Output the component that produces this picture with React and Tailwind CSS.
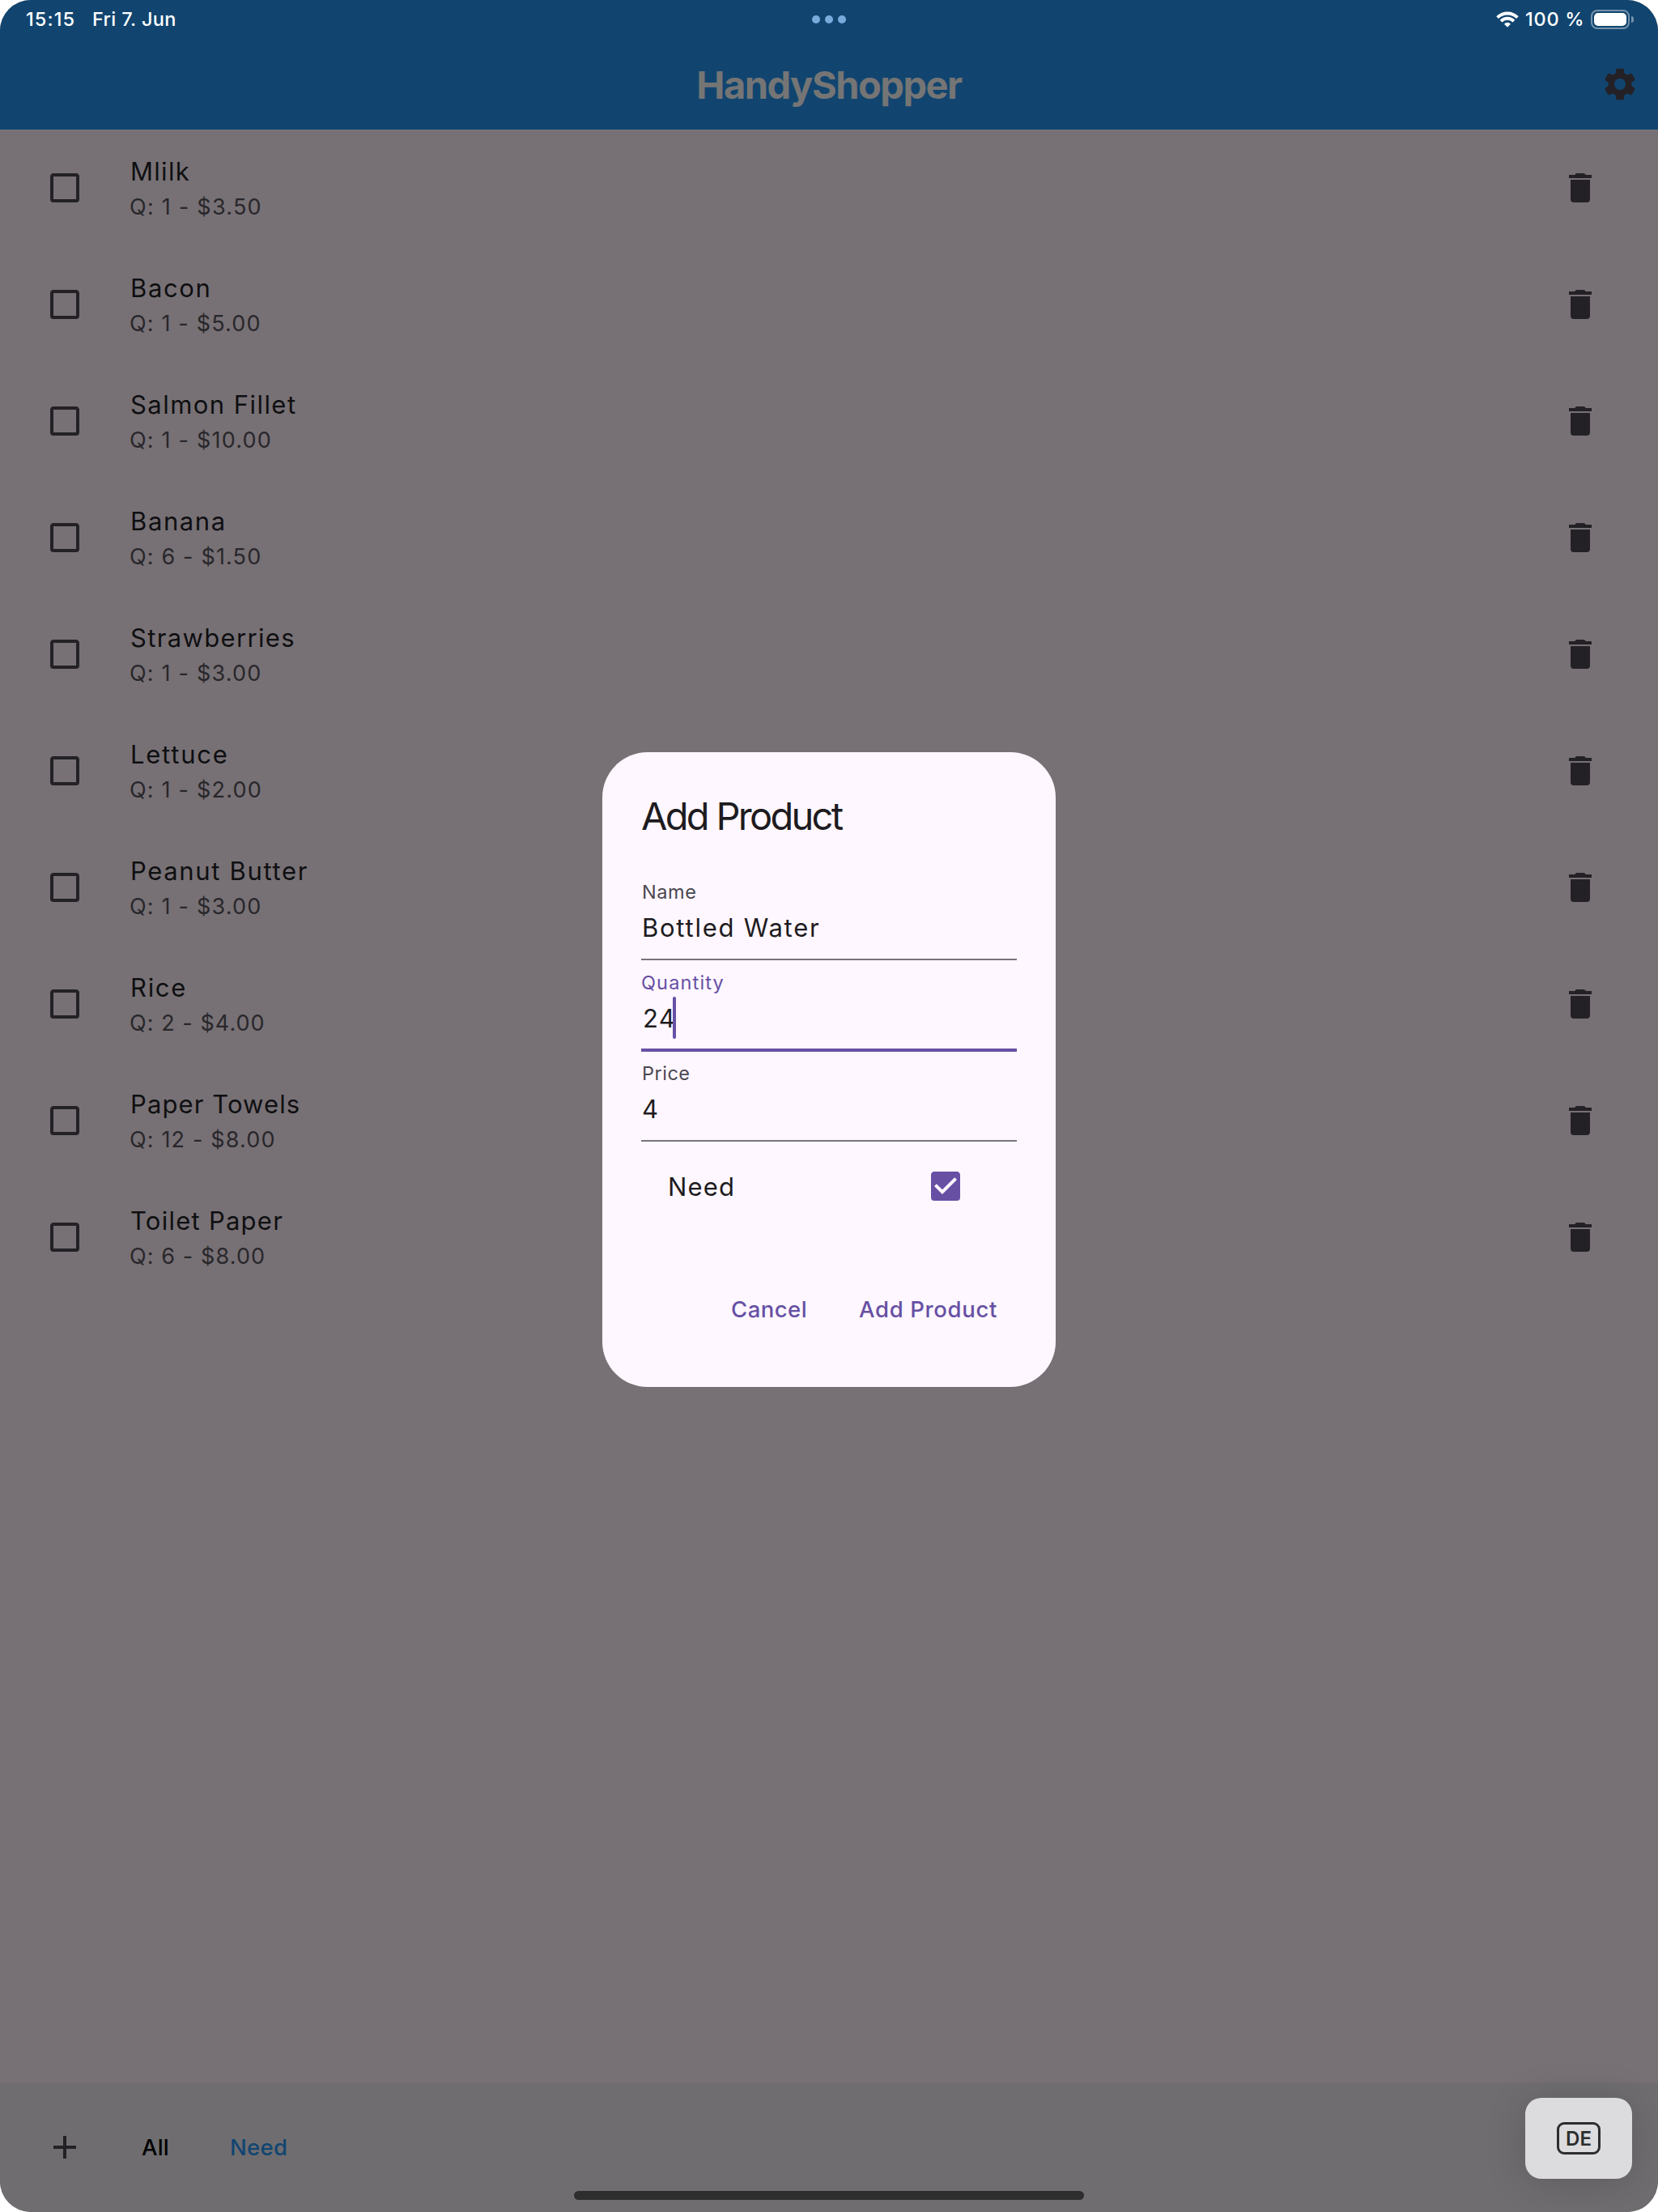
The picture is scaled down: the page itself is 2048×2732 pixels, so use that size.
const PRODUCTS = [
  { name: "Mlilk", track: "tracking-[1.3px]", detail: "Q: 1 - $3.50", detailTrack: "tracking-[1.25px]" },
  { name: "Bacon", track: "tracking-[1.6px]", detail: "Q: 1 - $5.00", detailTrack: "tracking-[1.15px]" },
  { name: "Salmon Fillet", track: "tracking-[1.45px]", detail: "Q: 1 - $10.00", detailTrack: "tracking-[1.2px]" },
  { name: "Banana", track: "tracking-[1.6px]", detail: "Q: 6 - $1.50", detailTrack: "tracking-[1.15px]" },
  { name: "Strawberries", track: "tracking-[1.35px]", detail: "Q: 1 - $3.00", detailTrack: "tracking-[1.2px]" },
  { name: "Lettuce", track: "tracking-[1.75px]", detail: "Q: 1 - $2.00", detailTrack: "tracking-[1.2px]" },
  { name: "Peanut Butter", track: "tracking-[1.65px]", detail: "Q: 1 - $3.00", detailTrack: "tracking-[1.2px]" },
  { name: "Rice", track: "tracking-[1.7px]", detail: "Q: 2 - $4.00", detailTrack: "tracking-[1.05px]" },
  { name: "Paper Towels", track: "tracking-[1.1px]", detail: "Q: 12 - $8.00", detailTrack: "tracking-[1.15px]" },
  { name: "Toilet Paper", track: "tracking-[1.25px]", detail: "Q: 6 - $8.00", detailTrack: "tracking-[1.1px]" },
];

const ICONS = {
  blank:
    "M19,3H5C3.89,3 3,3.89 3,5V19A2,2 0 0,0 5,21H19A2,2 0 0,0 21,19V5C21,3.89 20.1,3 19,3M19,5V19H5V5H19Z",
  marked:
    "M10,17L5,12L6.41,10.58L10,14.17L17.59,6.58L19,8M19,3H5C3.89,3 3,3.89 3,5V19A2,2 0 0,0 5,21H19A2,2 0 0,0 21,19V5C21,3.89 20.1,3 19,3Z",
  trash:
    "M19,4H15.5L15.2,3.7C14.8,3.2 14.3,3 13.8,3H10.2C9.7,3 9.2,3.2 8.8,3.7L8.5,4H5V6H19M6,19A2,2 0 0,0 8,21H16A2,2 0 0,0 18,19V7H6V19Z",
  plus: "M19,13H13V19H11V13H5V11H11V5H13V11H19V13Z",
  cog: "M12,15.65A3.65,3.65 0 0,1 8.35,12A3.65,3.65 0 0,1 12,8.35A3.65,3.65 0 0,1 15.65,12A3.65,3.65 0 0,1 12,15.65M19.43,12.97C19.47,12.65 19.5,12.33 19.5,12C19.5,11.67 19.47,11.34 19.43,11L21.54,9.37C21.73,9.22 21.78,8.95 21.66,8.73L19.66,5.27C19.54,5.05 19.27,4.96 19.05,5.05L16.56,6.05C16.04,5.66 15.5,5.32 14.87,5.07L14.5,2.42C14.46,2.18 14.25,2 14,2H10C9.75,2 9.54,2.18 9.5,2.42L9.13,5.07C8.5,5.32 7.96,5.66 7.44,6.05L4.95,5.05C4.73,4.96 4.46,5.05 4.34,5.27L2.34,8.73C2.21,8.95 2.27,9.22 2.46,9.37L4.57,11C4.53,11.34 4.5,11.67 4.5,12C4.5,12.33 4.53,12.65 4.57,12.97L2.46,14.63C2.27,14.78 2.21,15.05 2.34,15.27L4.34,18.73C4.46,18.95 4.73,19.03 4.95,18.95L7.44,17.94C7.96,18.34 8.5,18.68 9.13,18.93L9.5,21.58C9.54,21.82 9.75,22 10,22H14C14.25,22 14.46,21.82 14.5,21.58L14.87,18.93C15.5,18.67 16.04,18.34 16.56,17.94L19.05,18.95C19.27,19.03 19.54,18.95 19.66,18.73L21.66,15.27C21.78,15.05 21.73,14.78 21.54,14.63L19.43,12.97Z",
};

function Icon({ name, className = "size-12 text-[#242126]" }) {
  return (
    <svg viewBox="0 0 24 24" className={`shrink-0 fill-current ${className}`} aria-hidden="true">
      <path d={ICONS[name]} fillRule="evenodd" />
    </svg>
  );
}

function Wifi() {
  return (
    <svg viewBox="0 0 28 21" className="h-[21px] w-7" fill="none" stroke="#fff" aria-hidden="true">
      <path d="M1.63 7.63A17.5 17.5 0 0 1 26.37 7.63" strokeWidth="3.9" />
      <path d="M6.08 12.08A11.2 11.2 0 0 1 21.92 12.08" strokeWidth="3.9" />
      <path d="M14 19.2L10.5 15.7A5 5 0 0 1 17.5 15.7Z" fill="#fff" strokeWidth="1" strokeLinejoin="round" />
    </svg>
  );
}

function Battery() {
  return (
    <div className="flex items-center">
      <div className="h-6 w-12 rounded-[8px] border-2 border-[#7692ab] p-[2px]">
        <div className="h-4 w-10 rounded-[5px] bg-white" />
      </div>
      <div className="ml-[2px] h-2 w-[3px] rounded-r-full bg-[#7692ab]" />
    </div>
  );
}

function StatusBar() {
  return (
    <div className="grid h-12 grid-cols-3 items-center text-[23.5px] leading-[30px] font-medium text-white">
      <div className="flex pl-8">
        <span className="w-[82px] tracking-[1.1px]">15:15</span>
        <span className="tracking-[0.35px]">Fri 7. Jun</span>
      </div>
      <div className="flex justify-center gap-1.5">
        <span className="size-2.5 rounded-full bg-[#78abdc]" />
        <span className="size-2.5 rounded-full bg-[#78abdc]" />
        <span className="size-2.5 rounded-full bg-[#78abdc]" />
      </div>
      <div className="flex items-center justify-end pr-[30px]">
        <Wifi />
        <span className="mr-2 ml-2 w-[73px] tracking-[0.75px] whitespace-nowrap">100 %</span>
        <Battery />
      </div>
    </div>
  );
}

function Header() {
  return (
    <header className="h-40 bg-[#114570]">
      <StatusBar />
      <div className="grid h-28 grid-cols-[1fr_auto_1fr] items-center">
        <span />
        <h1 className="mt-px text-[47px] leading-[60px] font-bold tracking-[-1.5px] text-[#757575]">
          HandyShopper
        </h1>
        <div className="flex justify-end pr-6">
          <Icon name="cog" className="size-[46px] text-[#242126]" />
        </div>
      </div>
    </header>
  );
}

function ProductRow({ product }) {
  return (
    <li className="flex h-36 pr-[72px] pl-14">
      <div className="flex h-full items-center">
        <Icon name="blank" />
      </div>
      <div className="ml-14 flex-1 pt-[30px]">
        <p className={`pl-px text-[31px] leading-[44px] text-[#0f0f11] ${product.track}`}>{product.name}</p>
        <p className={`text-[27px] leading-[43px] text-[#29272b] ${product.detailTrack}`}>{product.detail}</p>
      </div>
      <div className="flex h-full items-center">
        <Icon name="trash" />
      </div>
    </li>
  );
}

function Field({ label, labelTrack, value, valueTrack, active }) {
  return (
    <div className={`relative h-28 border-b-2 pt-3 ${active ? "border-[#6750a4]" : "border-[#79747c]"}`}>
      <div className={`text-[23.5px] leading-8 ${labelTrack} ${active ? "text-[#6750a4]" : "text-[#4b4750]"}`}>
        {label}
      </div>
      <div className={`flex h-14 items-center text-[31px] leading-[56px] text-[#1d1b20] ${valueTrack}`}>
        {value}
        {active && <span className="mb-0.5 -ml-1 h-[52px] w-1 rounded-full bg-[#6750a4]" />}
      </div>
      {active && <div className="absolute inset-x-0 -bottom-[3px] h-1 bg-[#6750a4]" />}
    </div>
  );
}

function AddProductDialog() {
  return (
    <div className="absolute top-[929px] left-[744px] flex h-[784px] w-[560px] flex-col rounded-[56px] bg-[#fef7ff] px-12 pt-[47px]">
      <h2 className="mb-[34px] text-[47px] leading-[64px] tracking-[-2.7px] whitespace-nowrap text-[#1d1b20]">
        Add Product
      </h2>
      <Field label="Name" labelTrack="tracking-[0.6px] pl-px" value="Bottled Water" valueTrack="tracking-[1.75px] pl-px" />
      <Field label="Quantity" labelTrack="tracking-[1.15px]" value="24" valueTrack="tracking-[1.4px] pl-0.5" active />
      <Field label="Price" labelTrack="tracking-[0.5px] pl-px" value="4" valueTrack="tracking-[1.6px] pl-px" />
      <div className="flex h-[110px] items-center justify-between pr-16 pl-[33px]">
        <span className="mt-0.5 text-[31px] leading-[44px] tracking-[1.2px] text-[#1d1b20]">Need</span>
        <Icon name="marked" className="size-12 text-[#6750a4]" />
      </div>
      <div className="mt-[78px] flex h-10 items-center justify-end gap-16 pr-6 text-[27.5px] font-medium text-[#6750a4]">
        <span className="tracking-[0.45px]">Cancel</span>
        <span className="tracking-[0.65px]">Add Product</span>
      </div>
    </div>
  );
}

function BottomBar() {
  return (
    <footer className="flex h-40 items-center bg-[#6f6d70] pl-14 text-[27.5px] font-medium">
      <Icon name="plus" />
      <span className="mt-px ml-[71px] w-[109px] tracking-[0.2px] text-black">All</span>
      <span className="mt-px tracking-[0.3px] text-[#114570]">Need</span>
    </footer>
  );
}

function KeyboardBadge() {
  return (
    <div className="absolute top-[2591px] left-[1884px] flex h-[100px] w-[132px] items-center justify-center rounded-[20px] bg-[#dcdbde] shadow-[0_4px_50px_rgba(0,0,0,0.16)]">
      <div className="flex h-10 w-[54px] items-center justify-center rounded-[9px] border-[3px] border-[#2b2e2d] text-[24px] leading-[30px] font-semibold text-[#2b2e2d]">
        <span className="mt-px">DE</span>
      </div>
    </div>
  );
}

export default function App() {
  return (
    <div className="bg-white">
      <div className="relative flex h-[2732px] w-[2048px] flex-col overflow-hidden rounded-[38px] bg-[#777175] font-['Inter',sans-serif]">
        <Header />
        <ul className="flex-1">
          {PRODUCTS.map((p) => (
            <ProductRow key={p.name} product={p} />
          ))}
        </ul>
        <BottomBar />
        <AddProductDialog />
        <KeyboardBadge />
        <div className="absolute top-[2706px] left-[709px] h-[11px] w-[630px] rounded-full bg-[#2e2e2e]" />
      </div>
    </div>
  );
}
